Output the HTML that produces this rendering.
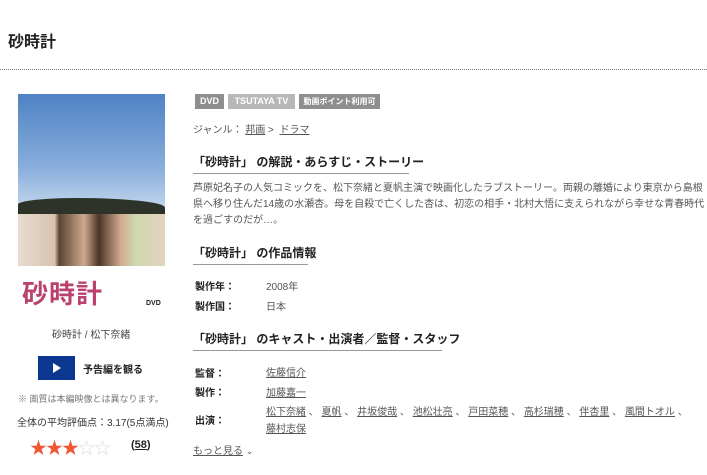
<!DOCTYPE html>
<html><head><meta charset="utf-8"><style>
*{margin:0;padding:0;box-sizing:border-box}
body{width:707px;height:475px;background:#fff;font-family:"Liberation Sans","Noto Sans CJK JP",sans-serif;color:#333;position:relative;overflow:hidden}
.a{position:absolute;white-space:nowrap}
h1{position:absolute;left:8px;top:28px;font-size:16px;font-weight:bold;color:#222}
.dot{position:absolute;left:0;top:69px;width:707px;border-top:1px dotted #777}
.poster{position:absolute;left:18px;top:94px;width:147px;height:224px;overflow:hidden;background:#fff}
.sky{position:absolute;left:0;top:0;width:147px;height:120px;background:linear-gradient(#4f82c4,#86addb 60%,#c9dbee)}
.hill{position:absolute;left:0;top:104px;width:147px;height:16px;background:#2d3328;border-radius:40% 60% 0 0}
.faces{position:absolute;left:0;top:120px;width:147px;height:52px;background:linear-gradient(90deg,#e8ddd0 0,#d8c3ad 25%,#5a4433 28%,#cfa98d 45%,#4a3529 55%,#d2ab90 70%,#cfd8b0 80%,#e3d3bf 100%)}
.ptitle{position:absolute;left:4px;top:180px;font-size:26px;font-weight:bold;color:#b9436e;letter-spacing:1px}
.badge{position:absolute;top:94px;height:15px;font-size:9px;font-weight:bold;color:#fff;line-height:15px;text-align:center}
.h{position:absolute;left:193px;font-size:12px;font-weight:bold;color:#222;padding-bottom:3px;border-bottom:1px solid #999;white-space:nowrap}
.p{position:absolute;left:193px;top:181px;width:515px;font-size:10px;line-height:16px;color:#555}
.l{font-size:10px;font-weight:bold;color:#222}
.v{font-size:10px;color:#555}
u{color:#555}
</style></head><body>
<h1>砂時計</h1>
<div class="dot"></div>
<div class="poster"><div class="sky"></div><div class="hill"></div><div class="faces"></div>
<div class="ptitle">砂時計</div><div class="a" style="left:128px;top:206px;font-size:7px;font-weight:bold;color:#222">DVD</div></div>
<div class="a" style="left:52px;top:326px;font-size:10px;color:#444">砂時計 / 松下奈緒</div>
<div class="a" style="left:38px;top:356px;width:37px;height:24px;background:#0c3790"><div style="position:absolute;left:15px;top:7px;border-left:8px solid #fff;border-top:5px solid transparent;border-bottom:5px solid transparent"></div></div>
<div class="a" style="left:83px;top:361px;font-size:10px;font-weight:bold;color:#222">予告編を観る</div>
<div class="a" style="left:18px;top:392px;font-size:9px;color:#777">※ 画質は本編映像とは異なります。</div>
<div class="a" style="left:17px;top:414px;font-size:10px;color:#333">全体の平均評価点：3.17(5点満点)</div>
<div class="a" style="left:30px;top:434px;font-size:17px;letter-spacing:-1px;color:#f05a32">★★★<span style="color:#ddd">☆☆</span></div>
<div class="a" style="left:131px;top:439px;font-size:11px;font-weight:bold;color:#222">(<u style="color:#222">58</u>)</div>

<div class="badge" style="left:195px;width:29px;background:#8e8e8e">DVD</div>
<div class="badge" style="left:228px;width:67px;background:#b8b8b8">TSUTAYA TV</div>
<div class="badge" style="left:299px;width:81px;background:#8e8e8e;font-size:8px">動画ポイント利用可</div>
<div class="a" style="left:193px;top:121px;font-size:10px;color:#555">ジャンル：&nbsp;<u>邦画</u> &gt;&nbsp; <u>ドラマ</u></div>
<div class="h" style="top:153px;width:216px">「砂時計」 の解説・あらすじ・ストーリー</div>
<div class="p">芦原妃名子の人気コミックを、松下奈緒と夏帆主演で映画化したラブストーリー。両親の離婚により東京から島根県へ移り住んだ14歳の水瀬杏。母を自殺で亡くした杏は、初恋の相手・北村大悟に支えられながら幸せな青春時代を過ごすのだが…。</div>
<div class="h" style="top:244px;width:115px">「砂時計」 の作品情報</div>
<div class="a l" style="left:195px;top:278px">製作年：</div><div class="a v" style="left:266px;top:278px">2008年</div>
<div class="a l" style="left:195px;top:298px">製作国：</div><div class="a v" style="left:266px;top:298px">日本</div>
<div class="h" style="top:330px;width:249px">「砂時計」 のキャスト・出演者／監督・スタッフ</div>
<div class="a l" style="left:195px;top:365px">監督：</div><div class="a v" style="left:266px;top:364px"><u>佐藤信介</u></div>
<div class="a l" style="left:195px;top:384px">製作：</div><div class="a v" style="left:266px;top:384px"><u>加藤嘉一</u></div>
<div class="a l" style="left:195px;top:412px">出演：</div>
<div class="a v" style="left:266px;top:403px"><u>松下奈緒</u> 、 <u>夏帆</u> 、 <u>井坂俊哉</u> 、 <u>池松壮亮</u> 、 <u>戸田菜穂</u> 、 <u>高杉瑞穂</u> 、 <u>伴杏里</u> 、 <u>風間トオル</u> 、</div>
<div class="a v" style="left:266px;top:420px"><u>藤村志保</u></div>
<div class="a v" style="left:193px;top:442px"><u>もっと見る</u> <span style="font-size:9px">⌄</span></div>
</body></html>
